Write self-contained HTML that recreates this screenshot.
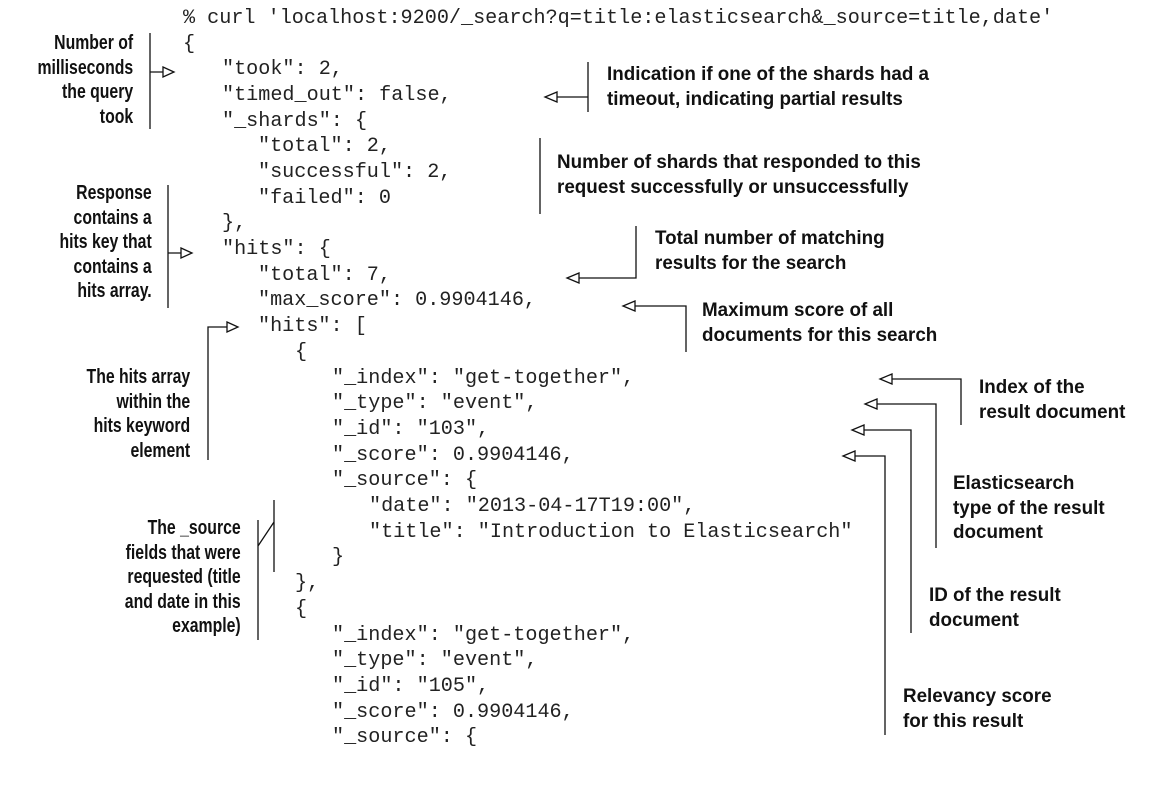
<!DOCTYPE html>
<html><head><meta charset="utf-8"><style>
html,body{margin:0;padding:0;background:#fff;}
body{width:1174px;height:801px;position:relative;overflow:hidden;}
.c{position:absolute;font-family:"Liberation Mono",monospace;font-size:20.15px;color:#222;white-space:pre;line-height:24px;}
.l{position:absolute;font-family:"Liberation Sans",sans-serif;font-weight:bold;font-size:20px;line-height:24.5px;color:#111;white-space:nowrap;}
.r{text-align:right;transform:scaleX(0.79);transform-origin:right top;}
.g{font-size:19.5px;transform:scaleX(0.965);transform-origin:left top;}
svg{position:absolute;left:0;top:0;}
</style></head><body>
<div class="c" style="left:183px;top:7px">% curl 'localhost:9200/_search?q=title:elasticsearch&amp;_source=title,date'</div>
<div class="c" style="left:183px;top:33px">{</div>
<div class="c" style="left:222px;top:58px">"took": 2,</div>
<div class="c" style="left:222px;top:84px">"timed_out": false,</div>
<div class="c" style="left:222px;top:110px">"_shards": {</div>
<div class="c" style="left:258px;top:135px">"total": 2,</div>
<div class="c" style="left:258px;top:161px">"successful": 2,</div>
<div class="c" style="left:258px;top:187px">"failed": 0</div>
<div class="c" style="left:222px;top:212px">},</div>
<div class="c" style="left:222px;top:238px">"hits": {</div>
<div class="c" style="left:258px;top:264px">"total": 7,</div>
<div class="c" style="left:258px;top:289px">"max_score": 0.9904146,</div>
<div class="c" style="left:258px;top:315px">"hits": [</div>
<div class="c" style="left:295px;top:341px">{</div>
<div class="c" style="left:332px;top:367px">"_index": "get-together",</div>
<div class="c" style="left:332px;top:392px">"_type": "event",</div>
<div class="c" style="left:332px;top:418px">"_id": "103",</div>
<div class="c" style="left:332px;top:444px">"_score": 0.9904146,</div>
<div class="c" style="left:332px;top:469px">"_source": {</div>
<div class="c" style="left:369px;top:495px">"date": "2013-04-17T19:00",</div>
<div class="c" style="left:369px;top:521px">"title": "Introduction to Elasticsearch"</div>
<div class="c" style="left:332px;top:546px">}</div>
<div class="c" style="left:295px;top:572px">},</div>
<div class="c" style="left:295px;top:598px">{</div>
<div class="c" style="left:332px;top:624px">"_index": "get-together",</div>
<div class="c" style="left:332px;top:649px">"_type": "event",</div>
<div class="c" style="left:332px;top:675px">"_id": "105",</div>
<div class="c" style="left:332px;top:701px">"_score": 0.9904146,</div>
<div class="c" style="left:332px;top:726px">"_source": {</div>

<div class="l r" style="right:1041px;top:31px">Number of<br>milliseconds<br>the query<br>took</div>
<div class="l r" style="right:1022px;top:181px">Response<br>contains a<br>hits key that<br>contains a<br>hits array.</div>
<div class="l r" style="right:984px;top:365px">The hits array<br>within the<br>hits keyword<br>element</div>
<div class="l r" style="right:933px;top:516px">The _source<br>fields that were<br>requested (title<br>and date in this<br>example)</div>

<div class="l g" style="left:607px;top:62px">Indication if one of the shards had a<br>timeout, indicating partial results</div>
<div class="l g" style="left:557px;top:150px">Number of shards that responded to this<br>request successfully or unsuccessfully</div>
<div class="l g" style="left:655px;top:226px">Total number of matching<br>results for the search</div>
<div class="l g" style="left:702px;top:298px">Maximum score of all<br>documents for this search</div>
<div class="l g" style="left:979px;top:375px">Index of the<br>result document</div>
<div class="l g" style="left:953px;top:471px">Elasticsearch<br>type of the result<br>document</div>
<div class="l g" style="left:929px;top:583px">ID of the result<br>document</div>
<div class="l g" style="left:903px;top:684px">Relevancy score<br>for this result</div>

<svg width="1174" height="801" fill="none" stroke="#111" stroke-width="1.3">
<path d="M150 33V129M150 72H163"/><path d="M163 67L174 72L163 77Z" fill="#fff"/>
<path d="M168 185V308M168 253H181"/><path d="M181 248L192 253L181 258Z" fill="#fff"/>
<path d="M208 460V327H227"/><path d="M227 322L238 327L227 332Z" fill="#fff"/>
<path d="M258 520V640M274 500V572M258 546L274 522"/>
<path d="M588 62V112M588 97H557"/><path d="M557 92L545 97L557 102Z" fill="#fff"/>
<path d="M540 138V214"/>
<path d="M636 226V278H579"/><path d="M579 273L567 278L579 283Z" fill="#fff"/>
<path d="M686 352V306H635"/><path d="M635 301L623 306L635 311Z" fill="#fff"/>
<path d="M961 425V379H892"/><path d="M892 374L880 379L892 384Z" fill="#fff"/>
<path d="M936 548V404H877"/><path d="M877 399L865 404L877 409Z" fill="#fff"/>
<path d="M911 633V430H864"/><path d="M864 425L852 430L864 435Z" fill="#fff"/>
<path d="M885 735V456H855"/><path d="M855 451L843 456L855 461Z" fill="#fff"/>
</svg>
</body></html>
